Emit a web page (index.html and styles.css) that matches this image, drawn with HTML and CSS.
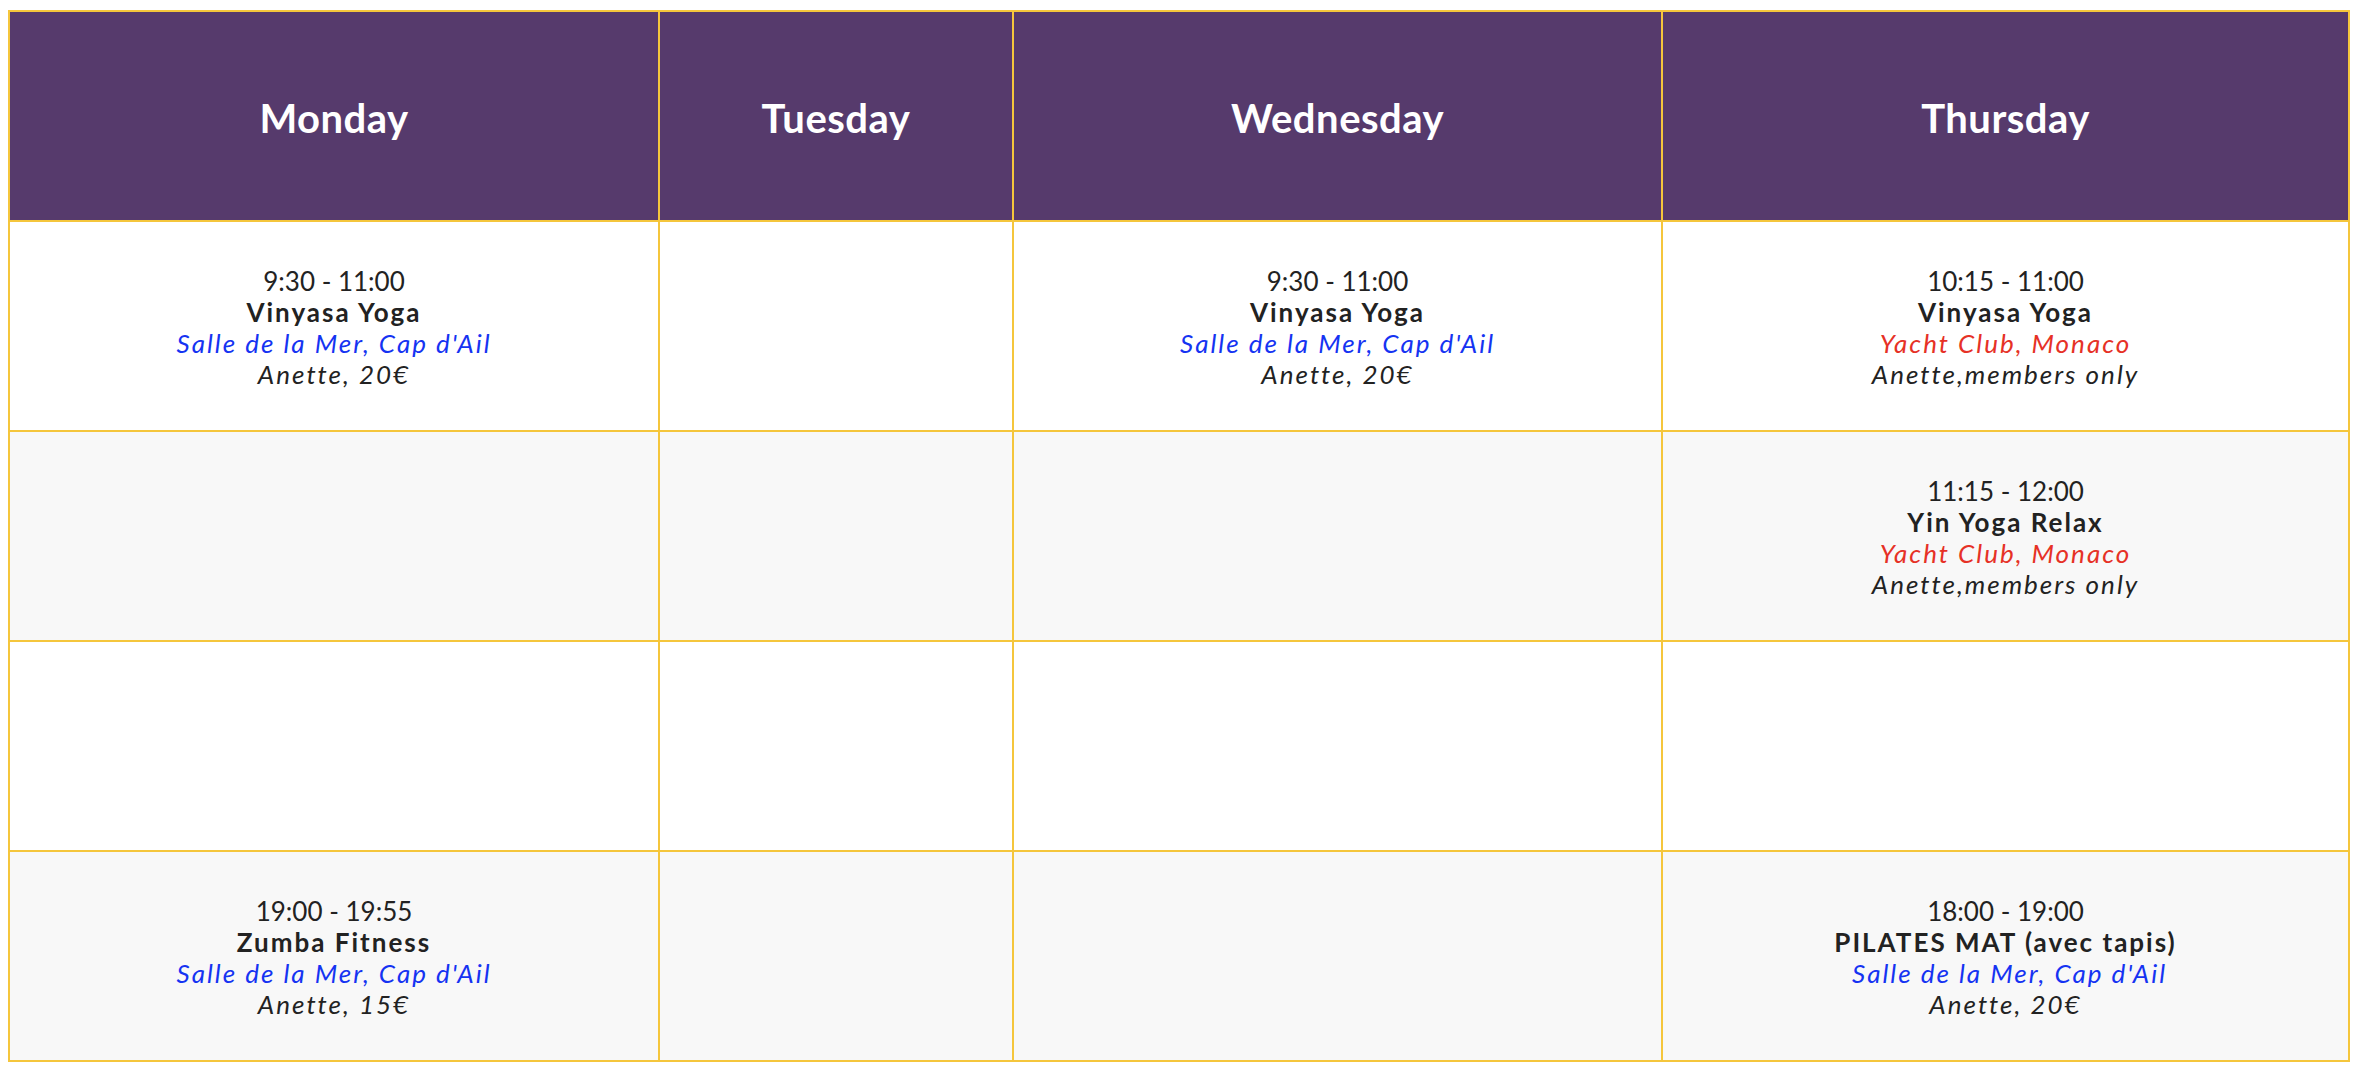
FILE: index.html
```html
<!DOCTYPE html>
<html>
<head>
<meta charset="utf-8">
<link rel="stylesheet" href="styles.css">
</head>
<body>
<table class="schedule">
  <colgroup>
    <col class="c-mon">
    <col class="c-tue">
    <col class="c-wed">
    <col class="c-thu">
  </colgroup>
  <thead>
    <tr class="head-row">
      <th>Monday</th>
      <th>Tuesday</th>
      <th>Wednesday</th>
      <th>Thursday</th>
    </tr>
  </thead>
  <tbody>
    <tr class="row">
      <td>
        <div class="time">9:30 - 11:00</div>
        <div class="name">Vinyasa Yoga</div>
        <div class="place blue">Salle de la Mer, Cap d'Ail</div>
        <div class="who">Anette, 20€</div>
      </td>
      <td></td>
      <td>
        <div class="time">9:30 - 11:00</div>
        <div class="name">Vinyasa Yoga</div>
        <div class="place blue">Salle de la Mer, Cap d'Ail</div>
        <div class="who">Anette, 20€</div>
      </td>
      <td>
        <div class="time">10:15 - 11:00</div>
        <div class="name">Vinyasa Yoga</div>
        <div class="place red">Yacht Club, Monaco</div>
        <div class="who">Anette,members only</div>
      </td>
    </tr>
    <tr class="row alt">
      <td></td>
      <td></td>
      <td></td>
      <td>
        <div class="time">11:15 - 12:00</div>
        <div class="name">Yin Yoga Relax</div>
        <div class="place red">Yacht Club, Monaco</div>
        <div class="who">Anette,members only</div>
      </td>
    </tr>
    <tr class="row">
      <td></td>
      <td></td>
      <td></td>
      <td></td>
    </tr>
    <tr class="row alt">
      <td>
        <div class="time">19:00 - 19:55</div>
        <div class="name">Zumba Fitness</div>
        <div class="place blue">Salle de la Mer, Cap d'Ail</div>
        <div class="who">Anette, 15€</div>
      </td>
      <td></td>
      <td></td>
      <td>
        <div class="time">18:00 - 19:00</div>
        <div class="name">PILATES MAT (avec tapis)</div>
        <div class="place blue">&nbsp;Salle de la Mer, Cap d'Ail</div>
        <div class="who">Anette, 20€</div>
      </td>
    </tr>
  </tbody>
</table>
</body>
</html>
```

FILE: styles.css
```css
html, body {
  background: #ffffff;
}
body {
  margin: 10px 8px 8px 8px;
  font-family: "Lato", "Open Sans", sans-serif;
  color: #222222;
}
.schedule {
  width: 100%;
  border-collapse: collapse;
  table-layout: fixed;
  border: 2px solid #f5c63c;
}
.c-mon { width: 650px; }
.c-tue { width: 354px; }
.c-wed { width: 649px; }
.c-thu { width: auto; }
.schedule th,
.schedule td {
  border: 2px solid #f5c63c;
  text-align: center;
  vertical-align: middle;
  padding: 3px 0 0 0;
}
.head-row {
  height: 210px;
  background: #563a6c;
}
.head-row th {
  color: #ffffff;
  font-size: 40px;
  font-weight: 700;
  letter-spacing: 0.5px;
}
.row {
  height: 210px;
  background: #ffffff;
}
.row.alt {
  background: #f8f8f8;
}
.row td {
  font-size: 26px;
  line-height: 31px;
}
.time {
  font-weight: 400;
}
.name {
  font-weight: 700;
  letter-spacing: 2px;
}
.place, .who {
  font-style: italic;
  letter-spacing: 2px;
}
.blue { color: #1533f2; }
.red { color: #e63126; }
```
